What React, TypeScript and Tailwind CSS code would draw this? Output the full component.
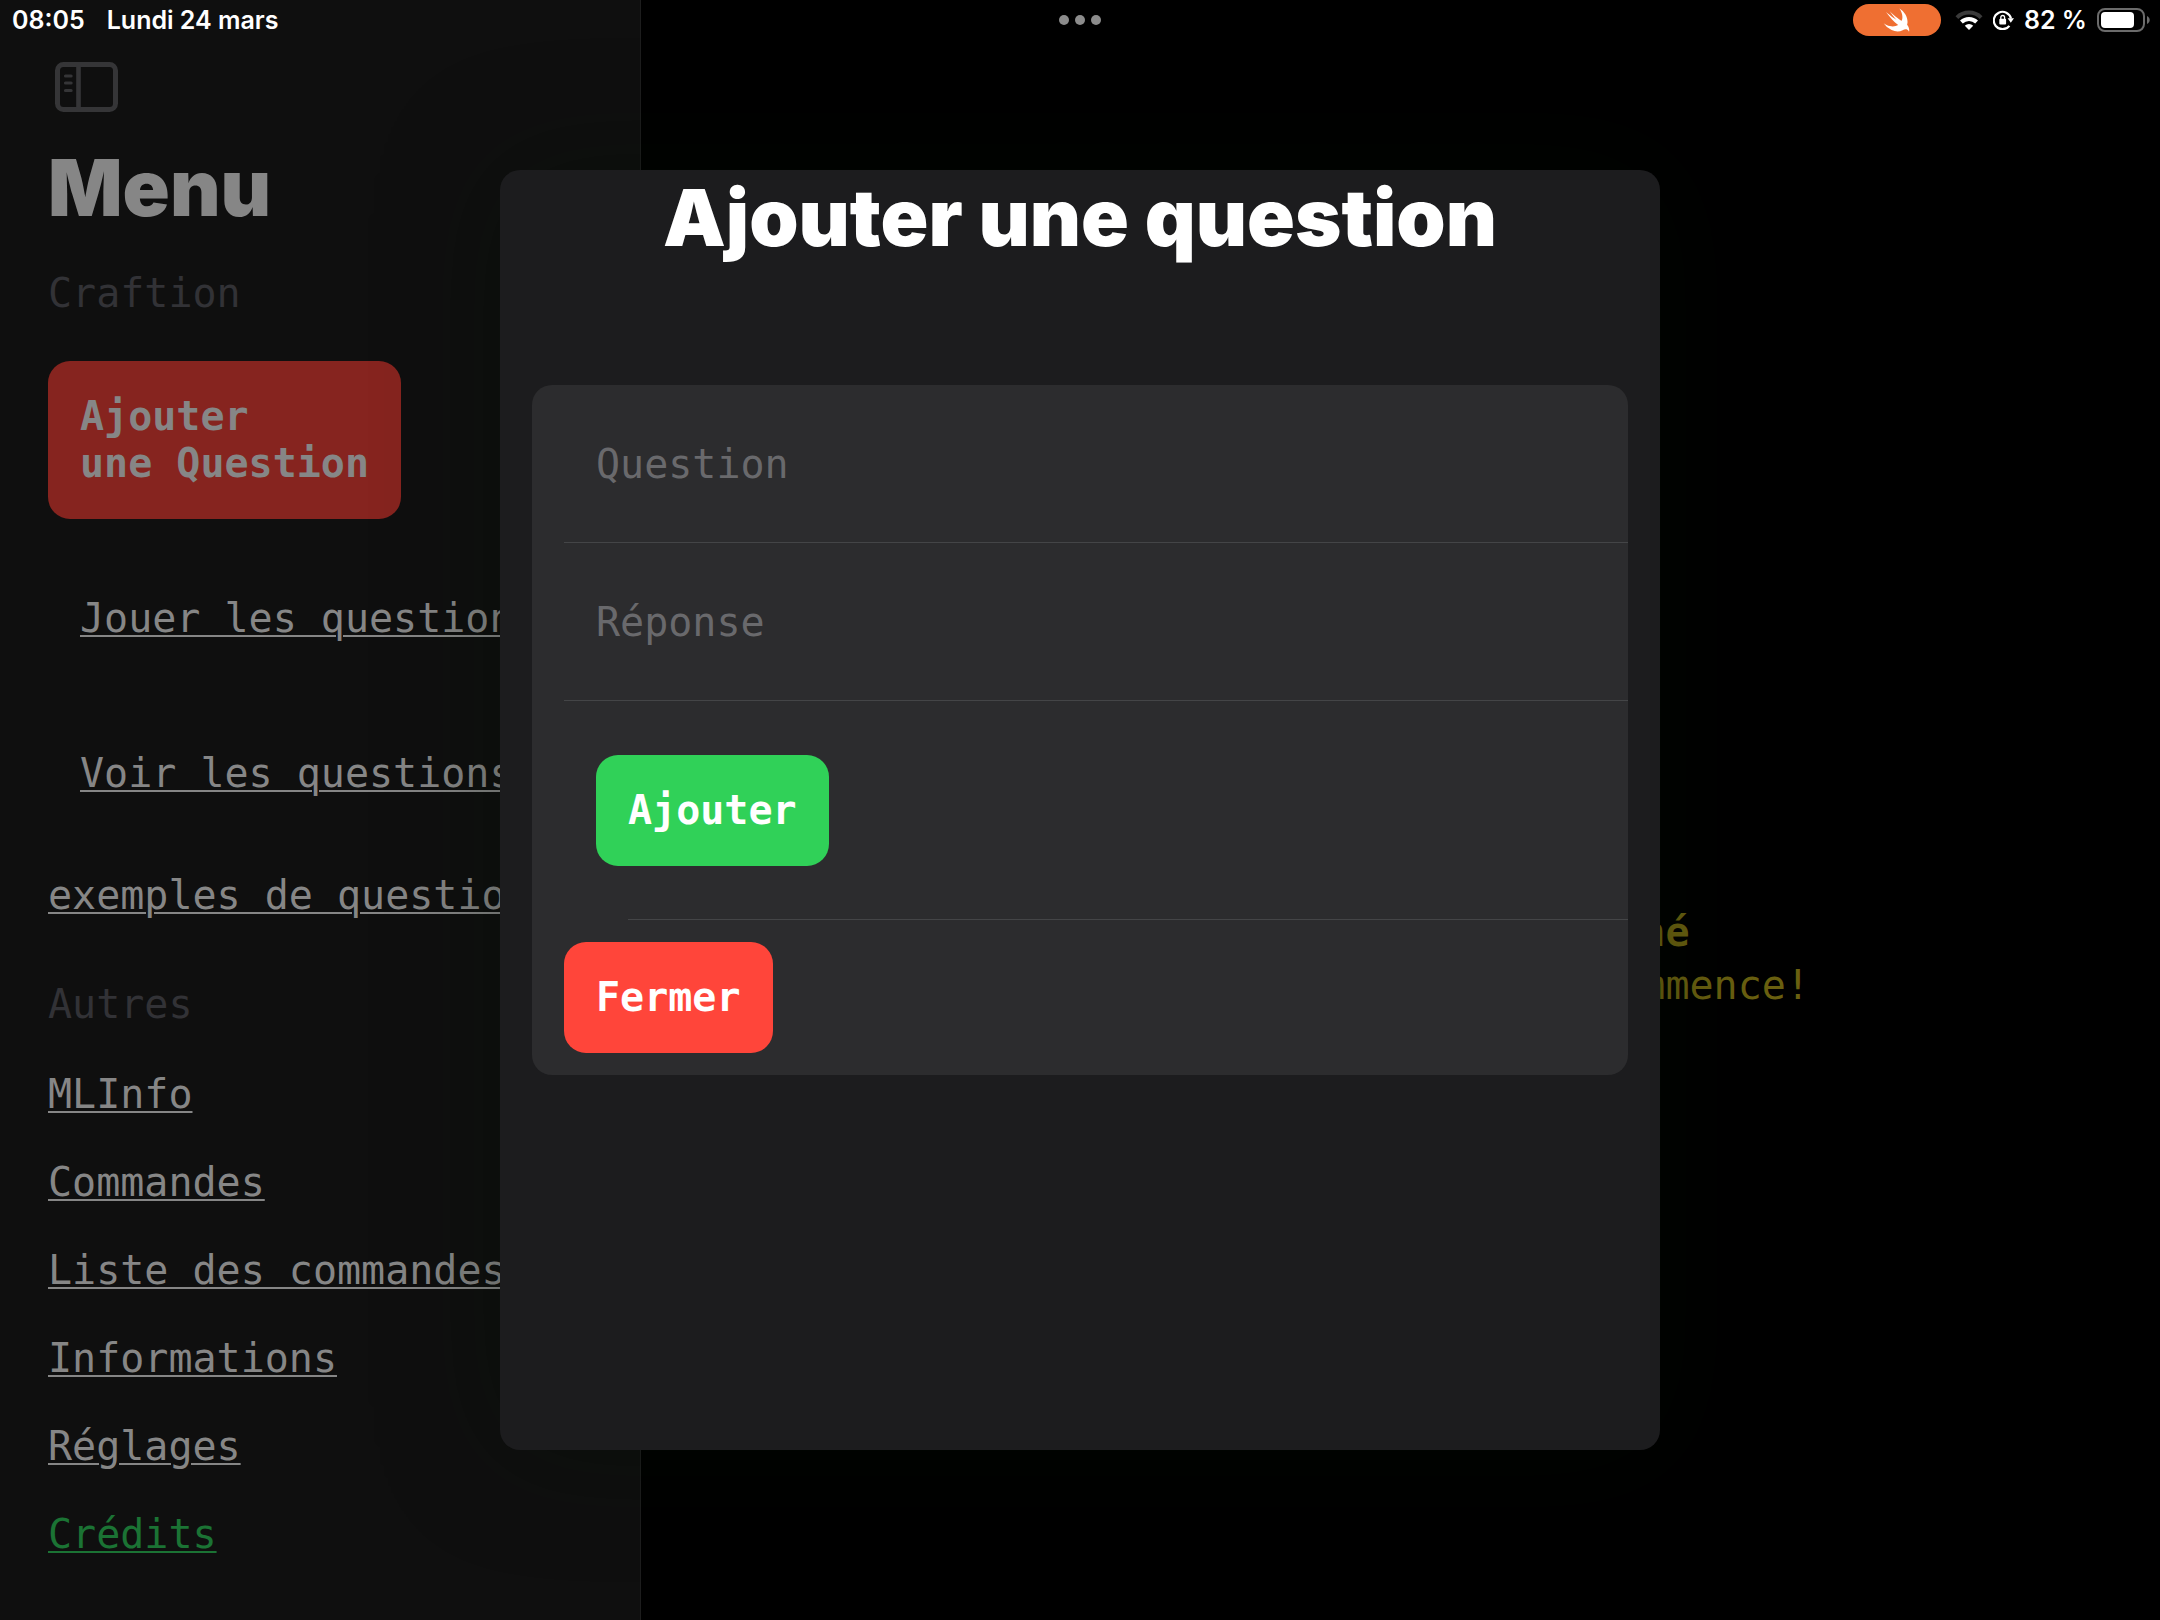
const others = ["MLInfo", "Commandes", "Liste des commandes", "Informations", "Réglages"];

function SidebarIcon() {
  return (
    <svg width="64" height="52" viewBox="0 0 64 52" fill="none" stroke="#353537">
      <rect x="2.5" y="2.5" width="58" height="45" rx="6" strokeWidth="5" />
      <path d="M23.5 3v44" strokeWidth="4.6" />
      <path d="M10.5 14h5.6M10.5 21h5.6M10.5 28.5h5.6" strokeWidth="3.2" strokeLinecap="round" />
    </svg>
  );
}

function SwiftIcon() {
  return (
    <svg width="27" height="24" viewBox="2 3 19 17" fill="#fff">
      <path d="M13.543 3.41c4.114 2.47 6.545 7.162 5.549 11.131-.024.093-.05.181-.076.272l.002.001c2.062 2.538 1.5 5.258 1.236 4.745-1.072-2.086-3.066-1.568-4.088-1.043a6.803 6.803 0 0 1-.281.158l-.02.012-.002.002c-2.115 1.123-4.957 1.205-7.812-.022a12.568 12.568 0 0 1-5.64-4.838c.649.48 1.35.902 2.097 1.252 3.019 1.414 6.051 1.311 8.197-.002C9.651 12.73 7.101 9.67 5.146 7.191a10.628 10.628 0 0 1-1.005-1.384c2.34 2.142 6.038 4.83 7.365 5.576C8.69 8.408 6.208 4.743 6.324 4.86c4.436 4.466 8.527 6.996 8.527 6.996.154.085.27.154.36.213.085-.215.16-.437.224-.668.708-2.588-.09-5.548-1.893-7.992z" />
    </svg>
  );
}

function WifiIcon() {
  return (
    <svg width="28" height="20" viewBox="0 0 28 20" fill="none">
      <path d="M1.9 7.6a17.2 17.2 0 0 1 24.2 0" stroke="#3a3a3a" strokeWidth="4" />
      <path d="M6.4 12a10.9 10.9 0 0 1 15.2 0" stroke="#fff" strokeWidth="4" />
      <path d="M14 20l-4.2-4.3a6 6 0 0 1 8.4 0z" fill="#fff" />
    </svg>
  );
}

function RotationLockIcon() {
  return (
    <svg width="21" height="20" viewBox="0 0 21 20" fill="none">
      <path d="M16.4 15.8A8.7 8.7 0 1 1 18 8.6" stroke="#fff" strokeWidth="2.2" />
      <path d="M14.6 8.2h6.4l-3.2 4.6z" fill="#fff" />
      <rect x="6.3" y="8.8" width="6.8" height="5.6" rx="1" fill="#fff" />
      <path d="M7.8 9.4V7.4a1.9 1.9 0 0 1 3.8 0v2" stroke="#fff" strokeWidth="1.3" />
    </svg>
  );
}

function BatteryIcon() {
  return (
    <svg width="53" height="24" viewBox="0 0 53 24" fill="none">
      <rect x="1" y="1" width="46" height="22" rx="7" stroke="#6b6b6b" strokeWidth="2" />
      <rect x="4" y="4" width="33" height="16" rx="4" fill="#fff" />
      <path d="M50 8c3.6 1.4 3.6 6.6 0 8z" fill="#6b6b6b" />
    </svg>
  );
}

function StatusBar() {
  return (
    <header className="absolute inset-x-0 top-0 z-20 grid h-10 grid-cols-3 items-center px-[10px] font-[Inter,sans-serif] text-[25px] leading-8 font-semibold text-white">
      <div className="flex gap-[22px] pl-[2px]">
        <time>08:05</time>
        <span>Lundi 24 mars</span>
      </div>
      <div className="flex justify-center gap-[6px]">
        <span className="size-[10px] rounded-full bg-[#8c8c8c]" />
        <span className="size-[10px] rounded-full bg-[#8c8c8c]" />
        <span className="size-[10px] rounded-full bg-[#8c8c8c]" />
      </div>
      <div className="flex items-center justify-end gap-[10px]">
        <span className="mr-1 flex h-8 w-[88px] items-center justify-center rounded-full bg-[#ef6f32]">
          <SwiftIcon />
        </span>
        <WifiIcon />
        <RotationLockIcon />
        <span>82 %</span>
        <BatteryIcon />
      </div>
    </header>
  );
}

function SideLink({ label, green = false }: { label: string; green?: boolean }) {
  return (
    <li className="flex h-[88px] items-center whitespace-nowrap">
      <a
        href="#"
        className={
          green
            ? "text-[#1b7334] underline decoration-2 underline-offset-3"
            : "text-[#868686] underline decoration-2 underline-offset-3"
        }
      >
        {label}
      </a>
    </li>
  );
}

function Sidebar() {
  return (
    <nav className="w-[641px] shrink-0 border-r border-[#1d1d1d] bg-[#0f0f0f] px-12 pt-[62px]">
      <button type="button" aria-label="Barre latérale" className="ml-[7px] block">
        <SidebarIcon />
      </button>
      <h1 className="mt-[27px] font-[Inter,sans-serif] text-[78px] leading-[94px] font-black text-[#868686]">
        Menu
      </h1>
      <h2 className="mt-[35px] pb-[22px] text-[#323236]">Craftion</h2>
      <ul>
        <li className="py-[22px]">
          <button
            type="button"
            className="block rounded-[22px] bg-[#86241f] p-8 text-left font-bold text-[#868686]"
          >
            Ajouter
            <br />
            une Question
          </button>
        </li>
        <li className="py-[22px] whitespace-nowrap">
          <a href="#" className="block p-8 text-[#868686] underline decoration-2 underline-offset-3">
            Jouer les questions
          </a>
        </li>
        <li className="py-[22px] whitespace-nowrap">
          <a href="#" className="block p-8 text-[#868686] underline decoration-2 underline-offset-3">
            Voir les questions
          </a>
        </li>
        <SideLink label="exemples de questions" />
      </ul>
      <h2 className="pt-[42px] pb-[22px] text-[#323236]">Autres</h2>
      <ul>
        {others.map((label) => (
          <SideLink key={label} label={label} />
        ))}
        <SideLink label="Crédits" green />
      </ul>
    </nav>
  );
}

function AddQuestionDialog() {
  return (
    <div className="absolute inset-0 z-10 flex items-center justify-center">
      <section
        role="dialog"
        aria-labelledby="dialog-title"
        className="min-h-[1280px] w-full max-w-[1160px] rounded-[20px] bg-[#1c1c1e] px-8 shadow-[0_0_120px_rgba(0,16,0,0.35)]"
      >
        <h2
          id="dialog-title"
          className="text-center font-[Inter,sans-serif] text-[79px] leading-[94px] font-black text-white"
        >
          Ajouter une question
        </h2>
        <form className="mt-[121px] rounded-[20px] bg-[#2c2c2e]">
          <input
            type="text"
            aria-label="Question"
            placeholder="Question"
            className="block w-full bg-transparent px-16 pt-14 pb-[54px] text-white outline-none placeholder:text-[#69696c]"
          />
          <hr className="ml-8 border-[#444547]" />
          <input
            type="text"
            aria-label="Réponse"
            placeholder="Réponse"
            className="block w-full bg-transparent px-16 pt-14 pb-[54px] text-white outline-none placeholder:text-[#69696c]"
          />
          <hr className="ml-8 border-[#444547]" />
          <div className="px-16 pt-[54px] pb-[53px]">
            <button type="button" className="block rounded-[22px] bg-[#30d158] p-8 font-bold text-white">
              Ajouter
            </button>
          </div>
          <hr className="ml-24 border-[#444547]" />
          <div className="px-8 py-[22px]">
            <button type="button" className="block rounded-[22px] bg-[#ff453a] p-8 font-bold text-white">
              Fermer
            </button>
          </div>
        </form>
      </section>
    </div>
  );
}

export default function App() {
  return (
    <div className="relative flex min-h-screen overflow-hidden bg-black font-['DejaVu_Sans_Mono',monospace] text-[40px] leading-[47px]">
      <StatusBar />
      <Sidebar />
      <main className="flex flex-1 flex-col items-center justify-center gap-[6px] pt-[298px] text-[#6a6010]">
        <p className="font-bold">Aucun bouton sélectionné</p>
        <p>Clique sur un menu et ça commence!</p>
      </main>
      <AddQuestionDialog />
    </div>
  );
}
